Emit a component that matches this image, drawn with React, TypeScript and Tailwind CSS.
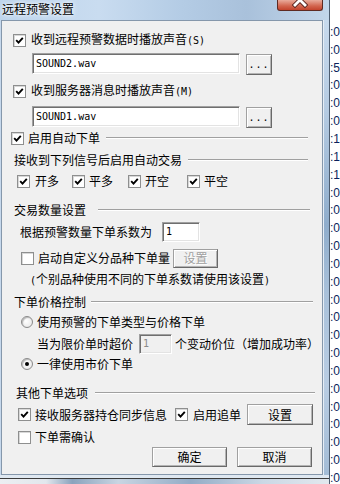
import React from "react";

const FONT = "font-['Noto_Sans_CJK_SC','Noto_Sans',sans-serif]";
const MONO = "font-['DejaVu_Sans_Mono',monospace]";

function P({ c }: { c: string }) {
  return <span className={`${MONO} text-[10px]`}>{c}</span>;
}

function Check({ checked }: { checked?: boolean }) {
  return (
    <span className="w-[13px] h-[13px] shrink-0 bg-white border border-[#8e8f8f] shadow-[inset_1px_1px_0_#d8d8d8] flex items-center justify-center">
      {checked && (
        <svg width="9" height="9" viewBox="0 0 9 9">
          <path d="M1.2 4.2 L3.5 6.6 L7.8 1.8" fill="none" stroke="#000" strokeWidth="1.9" />
        </svg>
      )}
    </span>
  );
}

function Radio({ checked }: { checked?: boolean }) {
  return (
    <span className="w-[12px] h-[12px] shrink-0 rounded-full bg-[radial-gradient(circle_at_40%_40%,#ffffff,#e4e4e4)] border border-[#8a8a8a] shadow-[inset_1px_1px_1px_#b8b8b8] flex items-center justify-center">
      {checked && <span className="w-[4px] h-[4px] rounded-full bg-black" />}
    </span>
  );
}

function Btn({ children, w, h, disabled, cls }: { children: React.ReactNode; w: string; h: string; disabled?: boolean; cls?: string }) {
  return (
    <div
      className={`${w} ${h} ${cls ?? ""} shrink-0 flex items-center justify-center bg-[#f0f0f0] border border-[#a0a0a0] border-r-[#696969] border-b-[#696969] shadow-[inset_1px_1px_0_#ffffff,inset_-1px_-1px_0_#b4b4b4] ${
        disabled ? "text-[#a0a0a0] [text-shadow:1px_1px_0_#ffffff]" : "text-black"
      }`}
    >
      {children}
    </div>
  );
}

function Field({ w, h, value, disabled }: { w: string; h: string; value: string; disabled?: boolean }) {
  return (
    <div
      className={`${w} ${h} ${MONO} text-[10px] shrink-0 flex items-center pl-[3px] border border-[#a0a0a0] border-r-white border-b-white shadow-[inset_1px_1px_0_#6f6f6f,inset_-1px_-1px_0_#e3e3e3] ${
        disabled ? "bg-[#f0f0f0] text-[#8a8a8a]" : "bg-white text-black"
      }`}
    >
      {value}
    </div>
  );
}

function Etch({ cls }: { cls?: string }) {
  return <div className={`flex-1 h-[2px] border-t border-[#a0a0a0] border-b border-b-white ${cls ?? ""}`} />;
}

const stripVals = ["0", "0", "5", "0", "0", "0", "1", "1", "1", "0", "0", "0", "0", "0", "0", "0", "0", "0", "0", "0", "0", "0", "0", "0", "0", "0", "0"];

export default function App() {
  return (
    <div className={`w-[340px] h-[484px] overflow-hidden flex bg-white text-[12px] leading-[14px] ${FONT}`}>
      {/* dialog */}
      <div className="w-[330px] h-[484px] flex flex-col border-r border-[#4d5d70] bg-[#c4d7eb]">
        {/* title bar */}
        <div className="h-[20px] flex items-start bg-[linear-gradient(to_right,#bdd4ec_0%,#c9dcf0_30%,#b4cce5_55%,#a9c1db_75%,#c2d6ea_100%)]">
          <div className="pl-[2px] pt-[2px] text-black text-[12px] leading-[14px] [text-shadow:0_0_6px_#ffffff,0_0_3px_#ffffff]">
            远程预警设置
          </div>
          <div className="ml-auto mr-[6px] w-[46px] h-[11px] rounded-b-[3px] border border-t-0 border-[#5e2a22] bg-[linear-gradient(to_bottom,#e9ab9b,#d2644d_60%,#c3432c)] overflow-hidden">
            <svg width="44" height="10" viewBox="0 0 44 10">
              <path d="M17 -5 L27 5 M27 -5 L17 5" stroke="#5a2520" strokeWidth="4.6" strokeLinecap="square" fill="none" />
              <path d="M17 -5 L27 5 M27 -5 L17 5" stroke="#ffffff" strokeWidth="2.8" strokeLinecap="square" fill="none" />
            </svg>
          </div>
        </div>

        {/* middle */}
        <div className="flex h-[455px]">
          <div className="w-[1px] bg-[#c6d8ec]" />
          <div className="w-[322px] h-[455px] border border-[#8597ab] bg-[#f0f0f0] flex flex-col overflow-hidden">
            {/* row 1 */}
            <div className="mt-[10px] h-[18px] pl-[11px] flex items-center gap-[5px]">
              <Check checked />
              <span>收到远程预警数据时播放声音<P c="(S)" /></span>
            </div>
            {/* row 2 */}
            <div className="mt-[4px] h-[21px] pl-[30px] flex items-start">
              <Field w="w-[208px]" h="h-[21px]" value="SOUND2.wav" />
              <Btn w="w-[26px]" h="h-[21px]" cls="ml-[6px] mt-[1px]">
                <span className={`${MONO} text-[10px] tracking-[1px]`}>...</span>
              </Btn>
            </div>
            {/* row 3 */}
            <div className="mt-[8px] h-[18px] pl-[11px] flex items-center gap-[5px]">
              <Check checked />
              <span>收到服务器消息时播放声音<P c="(M)" /></span>
            </div>
            {/* row 4 */}
            <div className="mt-[6px] h-[21px] pl-[30px] flex items-start">
              <Field w="w-[208px]" h="h-[21px]" value="SOUND1.wav" />
              <Btn w="w-[26px]" h="h-[21px]" cls="ml-[6px] mt-[1px]">
                <span className={`${MONO} text-[10px] tracking-[1px]`}>...</span>
              </Btn>
            </div>
            {/* row 5 */}
            <div className="mt-[2px] h-[18px] pl-[9px] pr-[14px] flex items-center gap-[4px]">
              <Check checked />
              <span>启用自动下单</span>
              <Etch cls="ml-[2px]" />
            </div>
            {/* row 6 */}
            <div className="mt-[4px] h-[18px] pl-[12px] pr-[14px] flex items-center">
              <span>接收到下列信号后启用自动交易</span>
              <Etch cls="ml-[6px]" />
            </div>
            {/* row 7 */}
            <div className="mt-[3px] h-[18px] pl-[15px] flex items-center">
              <div className="w-[55px] flex items-center gap-[5px]"><Check checked /><span>开多</span></div>
              <div className="w-[56px] flex items-center gap-[4px]"><Check checked /><span>平多</span></div>
              <div className="w-[59px] flex items-center gap-[4px]"><Check checked /><span>开空</span></div>
              <div className="flex items-center gap-[4px]"><Check checked /><span>平空</span></div>
            </div>
            {/* row 8 */}
            <div className="mt-[11px] h-[18px] pl-[12px] pr-[12px] flex items-center">
              <span>交易数量设置</span>
              <Etch cls="ml-[12px]" />
            </div>
            {/* row 9 */}
            <div className="mt-[3px] h-[20px] pl-[18px] flex items-center">
              <span>根据预警数量下单系数为</span>
              <Field w="w-[38px] ml-[10px]" h="h-[20px]" value="1" />
            </div>
            {/* row 10 */}
            <div className="mt-[6px] h-[20px] pl-[19px] flex items-center">
              <Check />
              <span className="ml-[4px]">启动自定义分品种下单量</span>
              <Btn w="w-[45px]" h="h-[19px]" cls="ml-[3px]" disabled>设置</Btn>
            </div>
            {/* row 11 */}
            <div className="mt-[3px] h-[18px] pl-[28px] flex items-center whitespace-nowrap">
              <span><P c="(" />个别品种使用不同的下单系数请使用该设置<P c=")" /></span>
            </div>
            {/* row 12 */}
            <div className="mt-[4px] h-[18px] pl-[12px] pr-[9px] flex items-center">
              <span>下单价格控制</span>
              <Etch cls="ml-[5px]" />
            </div>
            {/* row 13 */}
            <div className="mt-[2px] h-[18px] pl-[19px] flex items-center gap-[4px]">
              <Radio />
              <span>使用预警的下单类型与价格下单</span>
            </div>
            {/* row 14 */}
            <div className="mt-[3px] h-[20px] pl-[35px] flex items-center whitespace-nowrap">
              <span>当为限价单时超价</span>
              <Field w="w-[33px] ml-[6px]" h="h-[20px]" value="1" disabled />
              <span className="ml-[3px]">个变动价位（增加成功率）</span>
            </div>
            {/* row 15 */}
            <div className="mt-[1px] h-[18px] pl-[19px] flex items-center gap-[4px]">
              <Radio checked />
              <span>一律使用市价下单</span>
            </div>
            {/* row 16 */}
            <div className="mt-[11px] h-[18px] pl-[14px] pr-[7px] flex items-center">
              <span>其他下单选项</span>
              <Etch cls="ml-[7px]" />
            </div>
            {/* row 17 */}
            <div className="mt-[2px] h-[21px] pl-[16px] flex items-center">
              <Check checked />
              <span className="ml-[4px]">接收服务器持仓同步信息</span>
              <span className="ml-[8px]"><Check checked /></span>
              <span className="ml-[5px]">启用追单</span>
              <Btn w="w-[66px]" h="h-[21px]" cls="ml-[6px]">设置</Btn>
            </div>
            {/* row 18 */}
            <div className="mt-[3px] h-[18px] pl-[16px] flex items-center gap-[4px]">
              <Check />
              <span>下单需确认</span>
            </div>
            {/* row 19 */}
            <div className="mt-[1px] h-[20px] pl-[150px] flex items-center gap-[10px]">
              <Btn w="w-[75px]" h="h-[20px]">确定</Btn>
              <Btn w="w-[75px]" h="h-[20px]">取消</Btn>
            </div>
          </div>
          <div className="w-[6px] bg-[linear-gradient(to_bottom,#c8daed_0%,#b5cbe2_20%,#8fadcc_45%,#a9c1da_60%,#b9cde3_80%,#a3bcd6_100%)] border-l border-[#e6eef6]" />
        </div>

        {/* bottom frame */}
        <div className="flex-1 flex flex-col">
          <div className="h-[3px] bg-[#dfe8f1]" />
          <div className="h-[1px] bg-[#3c3c3c]" />
          <div className="flex-1 bg-[linear-gradient(to_right,#eceff2_0%,#e2e7ed_14%,#8aa3bd_22%,#c8d5e2_36%,#93acc6_58%,#cbd8e5_80%,#e2e8ee_100%)]" />
        </div>
      </div>

      {/* background app strip */}
      <div className="w-[10px] h-[484px] bg-white pt-[23px] flex flex-col overflow-hidden">
        {stripVals.map((v, i) => (
          <div key={i} className="h-[17.85px] shrink-0 flex items-center font-['Liberation_Sans',sans-serif] text-[12px] leading-[14px] text-[#0b1f5c] whitespace-nowrap">
            :{v}
          </div>
        ))}
      </div>
    </div>
  );
}
